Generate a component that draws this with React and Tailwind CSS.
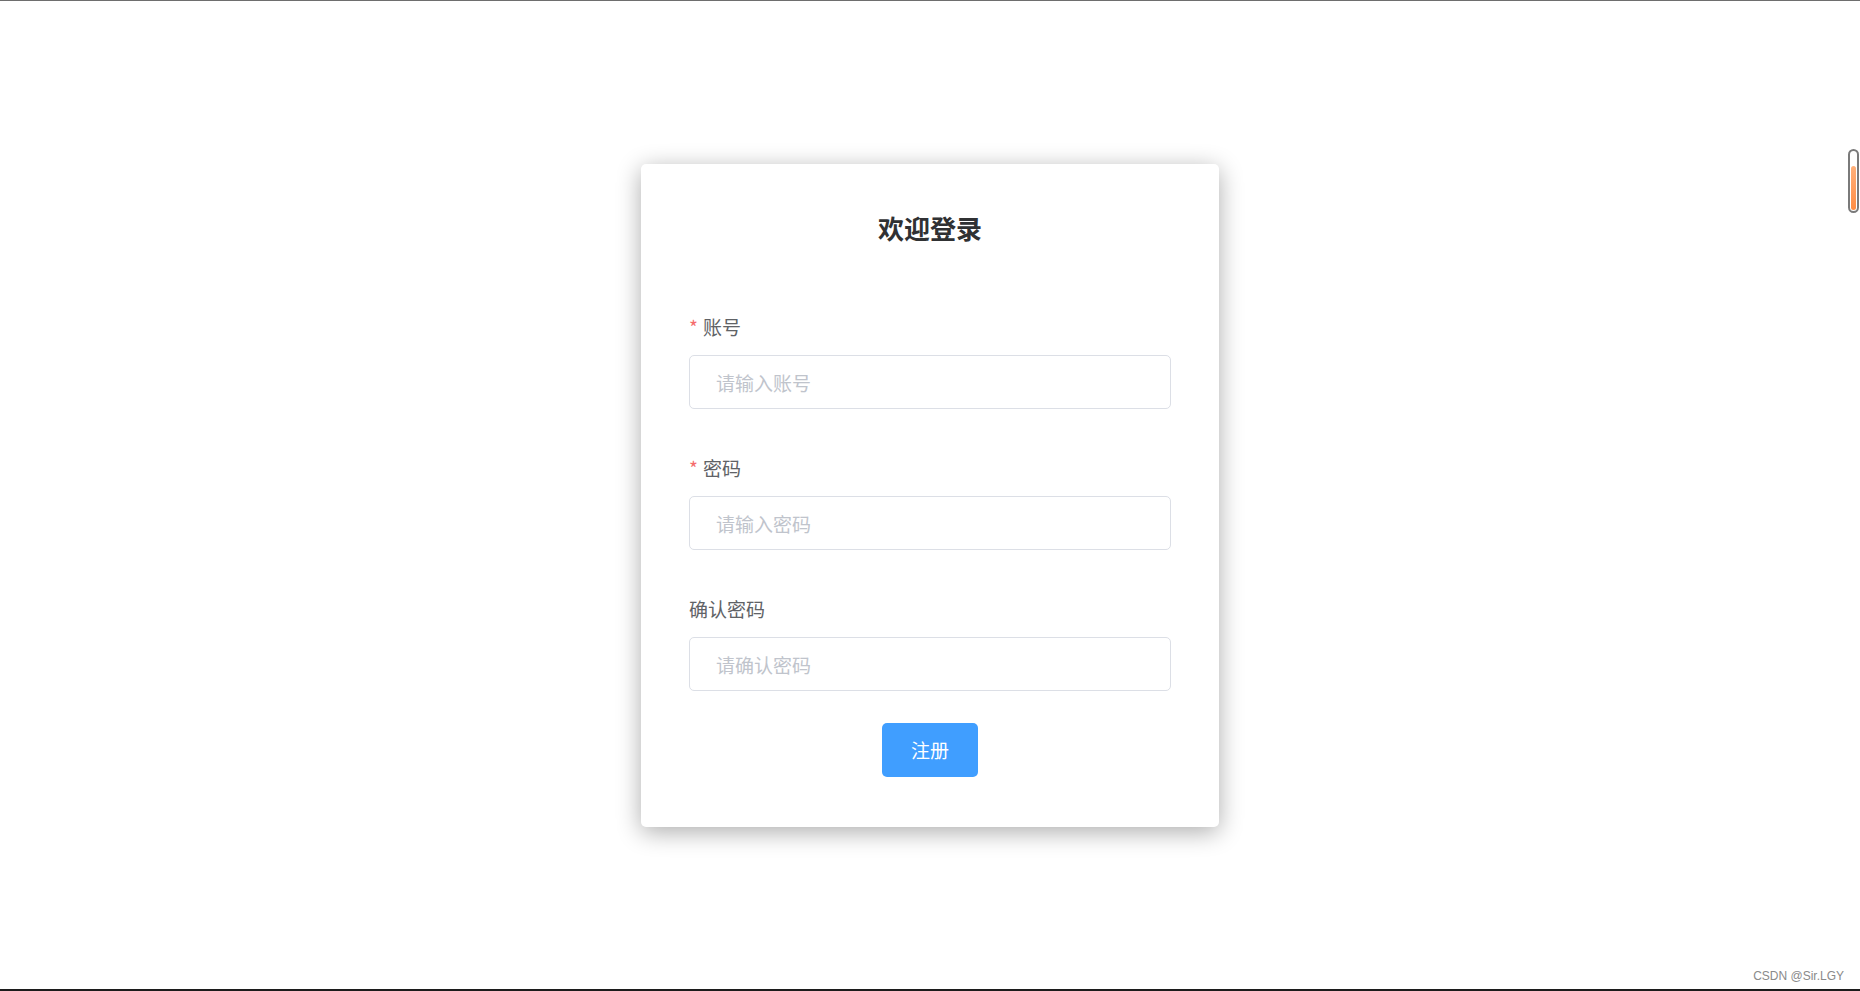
import React from "react";

const font = { fontFamily: '"Noto Sans CJK SC", "Noto Sans", sans-serif' };

function Field({ label, required, placeholder, type = "text" }) {
  return (
    <div className="flex flex-col">
      <label className="flex items-center text-[19px] leading-[40px] text-[#606266] pb-[8px]">
        {required && <span className="text-[#f56c6c] mr-[5px]">*</span>}
        <span>{label}</span>
      </label>
      <input
        type={type}
        placeholder={placeholder}
        className="h-[54px] w-full rounded-[5px] border border-[#dcdfe6] bg-white px-[26px] text-[19px] text-[#606266] placeholder:text-[#c0c4cc] outline-none"
        style={font}
      />
    </div>
  );
}

export default function App() {
  return (
    <div
      className="relative flex h-[991px] w-full items-center justify-center overflow-hidden bg-white"
      style={font}
    >
      <div className="absolute left-0 right-0 top-0 h-px bg-[#6e6e6e]" />
      <div className="absolute bottom-0 left-0 right-0 h-[2px] bg-[#1c1c1c]" />

      <div className="flex w-[578px] flex-col rounded-[5px] bg-white px-[48px] pb-[50px] pt-[46px] shadow-[0_5px_25px_rgba(0,0,0,0.33)]">
        <h1 className="text-center text-[26px] font-bold leading-[36px] text-[#303133]">
          欢迎登录
        </h1>
        <div className="mt-[61px] flex flex-col gap-[39px]">
          <Field label="账号" required placeholder="请输入账号" />
          <Field label="密码" required placeholder="请输入密码" type="password" />
          <Field label="确认密码" placeholder="请确认密码" type="password" />
        </div>
        <div className="mt-[32px] flex justify-center">
          <button className="h-[54px] w-[96px] rounded-[5px] bg-[#409eff] text-[19px] text-white">
            注册
          </button>
        </div>
      </div>

      <div className="absolute right-[1px] top-[149px] flex h-[64px] w-[11px] items-end justify-center rounded-full border-2 border-[#7a7a7a] bg-white pb-[1px]">
        <div className="h-[44px] w-[5px] rounded-full bg-gradient-to-b from-[#ffb07a] to-[#ff8c42]" />
      </div>

      <div
        className="absolute bottom-[6px] right-[16px] text-[12px] text-[#8a8a8a]"
        style={{ fontFamily: '"Liberation Sans", Arial, sans-serif' }}
      >
        CSDN @Sir.LGY
      </div>
    </div>
  );
}
